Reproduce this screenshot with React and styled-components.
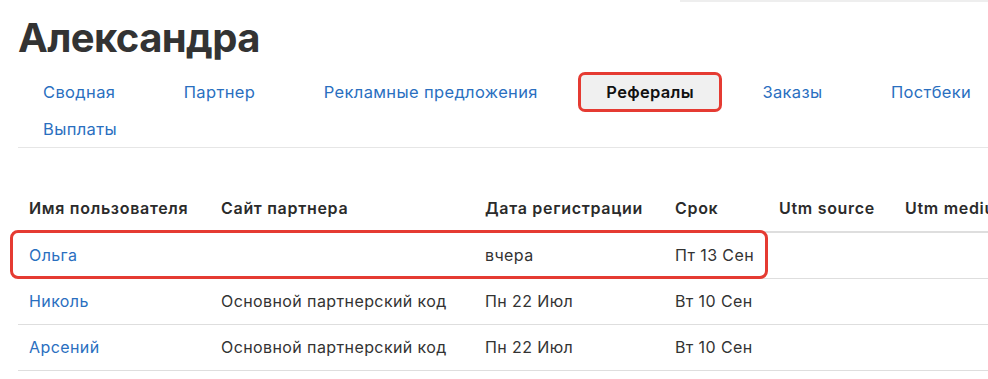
import styled, { createGlobalStyle } from 'styled-components';

const GlobalStyle = createGlobalStyle`
  html, body {
    margin: 0;
    padding: 0;
    background: #fff;
    overflow: hidden;
  }
  body {
    font-family: Inter, "Noto Sans", sans-serif;
    color: #333;
  }
`;

const tabs = ['Сводная', 'Партнер', 'Рекламные предложения', 'Рефералы', 'Заказы', 'Постбеки', 'Выплаты'];

const rows = [
  { name: 'Ольга', site: '', date: 'вчера', term: 'Пт 13 Сен', marked: true },
  { name: 'Николь', site: 'Основной партнерский код', date: 'Пн 22 Июл', term: 'Вт 10 Сен' },
  { name: 'Арсений', site: 'Основной партнерский код', date: 'Пн 22 Июл', term: 'Вт 10 Сен' },
];

const App = () => {
  return (
    <Page>
      <GlobalStyle />
      <TopBar />
      <Title>Александра</Title>
      <Tabs>
        {tabs.map((t) => (
          <Tab key={t} $active={t === 'Рефералы'}>{t}</Tab>
        ))}
      </Tabs>
      <Table>
        <colgroup>
          <col style={{ width: 192 }} />
          <col style={{ width: 264 }} />
          <col style={{ width: 190 }} />
          <col style={{ width: 104 }} />
          <col style={{ width: 126 }} />
          <col style={{ width: 140 }} />
        </colgroup>
        <thead>
          <tr>
            <Th>Имя пользователя</Th>
            <Th>Сайт партнера</Th>
            <Th>Дата регистрации</Th>
            <Th>Срок</Th>
            <Th>Utm source</Th>
            <Th>Utm medium</Th>
          </tr>
        </thead>
        <tbody>
          {rows.map((r) => (
            <tr key={r.name}>
              <FirstTd>
                {r.marked && <Marker />}
                <UserLink>{r.name}</UserLink>
              </FirstTd>
              <Td>{r.site}</Td>
              <Td>{r.date}</Td>
              <Td>{r.term}</Td>
              <Td />
              <Td />
            </tr>
          ))}
        </tbody>
      </Table>
    </Page>
  );
};

const Page = styled.div`
  width: 1060px;
  padding: 0 0 0 18px;
  height: 379px;
`;

const TopBar = styled.div`
  margin-left: 662px;
  height: 2px;
  background: #eeeeee;
`;

const Title = styled.h1`
  margin: 12px 0 0 0;
  font-size: 40px;
  line-height: 48px;
  font-weight: 700;
  color: #333;
  letter-spacing: -0.6px;
`;

const Tabs = styled.nav`
  display: flex;
  flex-wrap: wrap;
  column-gap: 18.5px;
  row-gap: 3px;
  margin-top: 13px;
  padding-bottom: 1px;
  border-bottom: 1px solid #e6e6e6;
  width: 1042px;
`;

const Tab = styled.a`
  display: block;
  padding: 7px 25px;
  font-size: 16.5px;
  line-height: 20px;
  letter-spacing: ${(p) => (p.$active ? '0.3px' : '0.35px')};
  border-radius: 4px;
  color: ${(p) => (p.$active ? '#111' : '#2a6fbf')};
  font-weight: ${(p) => (p.$active ? 600 : 400)};
  background: ${(p) => (p.$active ? '#f0f0f0' : 'transparent')};
  outline: ${(p) => (p.$active ? '3px solid #e53b32' : 'none')};
  cursor: pointer;
`;

const Table = styled.table`
  margin-top: 40px;
  border-collapse: collapse;
  table-layout: fixed;
  width: 1016px;
`;

const Th = styled.th`
  text-align: left;
  padding: 10px 11px 13px;
  font-size: 16px;
  line-height: 20px;
  font-weight: 600;
  letter-spacing: 0.7px;
  color: #2b2b2b;
  border-bottom: 2px solid #dedede;
  white-space: nowrap;
  overflow: hidden;
`;

const Td = styled.td`
  padding: 12px 11px 13px;
  font-size: 16px;
  line-height: 20px;
  letter-spacing: 0.4px;
  color: #333;
  border-bottom: 1px solid #dedede;
  white-space: nowrap;
`;

const FirstTd = styled(Td)`
  position: relative;
`;

const Marker = styled.span`
  position: absolute;
  left: -8px;
  top: -3px;
  width: 758px;
  height: 49px;
  box-sizing: border-box;
  border: 3px solid #e53b32;
  border-radius: 8px;
  pointer-events: none;
`;

const UserLink = styled.a`
  color: #2a6fbf;
  cursor: pointer;
`;

export default App;
